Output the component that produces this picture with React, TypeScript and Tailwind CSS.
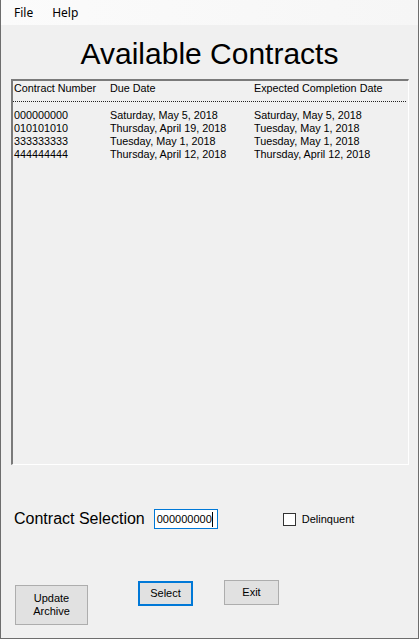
const contracts = [
  { num: "000000000", due: "Saturday, May 5, 2018", done: "Saturday, May 5, 2018" },
  { num: "010101010", due: "Thursday, April 19, 2018", done: "Tuesday, May 1, 2018" },
  { num: "333333333", due: "Tuesday, May 1, 2018", done: "Tuesday, May 1, 2018" },
  { num: "444444444", due: "Thursday, April 12, 2018", done: "Thursday, April 12, 2018" },
];

export default function App() {
  return (
    <div className="w-[420px] h-[639px] bg-white">
      <div
        className="w-[419px] h-[639px] bg-[#f0f0f0] border-l border-r border-b border-[#6d6d6d] flex flex-col text-black"
        style={{ fontFamily: '"Liberation Sans", Arial, sans-serif' }}
      >
        {/* Menu */}
        <div
          className="h-[25px] bg-gradient-to-r from-[#fbfbfb] to-[#f6f6f6] flex items-center text-[12px] pl-[13px] gap-[19px]"
          style={{ fontFamily: '"Noto Sans", "Liberation Sans", sans-serif' }}
        >
          <span>File</span>
          <span>Help</span>
        </div>

        <h1 className="mt-[14px] h-[30px] text-[30px] leading-[30px] text-center">Available Contracts</h1>

        {/* List box */}
        <div className="mt-[10px] ml-[10px] w-[398px] h-[386px] border-t-2 border-l-2 border-t-[#7a7a7a] border-l-[#7a7a7a] border-b border-r border-b-white border-r-white flex flex-col text-[10.8px] leading-[13px]">
          <div className="grid grid-cols-[96px_144px_1fr] pl-[1px] pt-[1px]">
            <span>Contract Number</span>
            <span>Due Date</span>
            <span>Expected Completion Date</span>
          </div>
          <div className="mt-[6px] mr-[2px] border-t border-dotted border-[#222]" />
          <div className="mt-[7px] flex flex-col pl-[1px]">
            {contracts.map((c) => (
              <div key={c.num} className="grid grid-cols-[96px_144px_1fr]">
                <span>{c.num}</span>
                <span>{c.due}</span>
                <span>{c.done}</span>
              </div>
            ))}
          </div>
        </div>

        {/* Selection row */}
        <div className="mt-[44px] flex items-center h-[20px]">
          <span className="ml-[13px] text-[16px] leading-[20px]">Contract Selection</span>
          <div className="ml-[9px] w-[64px] h-[20px] border border-[#0078d7] bg-white flex items-center pl-[2px] text-[11px]">
            <span>000000000</span>
            <span className="w-px h-[15px] bg-black" />
          </div>
          <div className="ml-[65px] flex items-center gap-[6px] text-[11px]">
            <span className="w-[13px] h-[13px] border border-[#333] bg-white" />
            <span>Delinquent</span>
          </div>
        </div>

        {/* Buttons */}
        <div className="mt-[51px] flex items-start text-[11px] leading-[13px]">
          <button className="ml-[14px] mt-[5px] w-[73px] h-[40px] bg-[#e1e1e1] border border-[#adadad] flex flex-col items-center justify-center">
            <span>Update</span>
            <span>Archive</span>
          </button>
          <button className="ml-[50px] mt-[1px] w-[55px] h-[25px] bg-[#e1e1e1] border-2 border-[#0078d7] flex items-center justify-center">
            Select
          </button>
          <button className="ml-[31px] w-[55px] h-[25px] bg-[#e1e1e1] border border-[#adadad] flex items-center justify-center">
            Exit
          </button>
        </div>
      </div>
    </div>
  );
}
